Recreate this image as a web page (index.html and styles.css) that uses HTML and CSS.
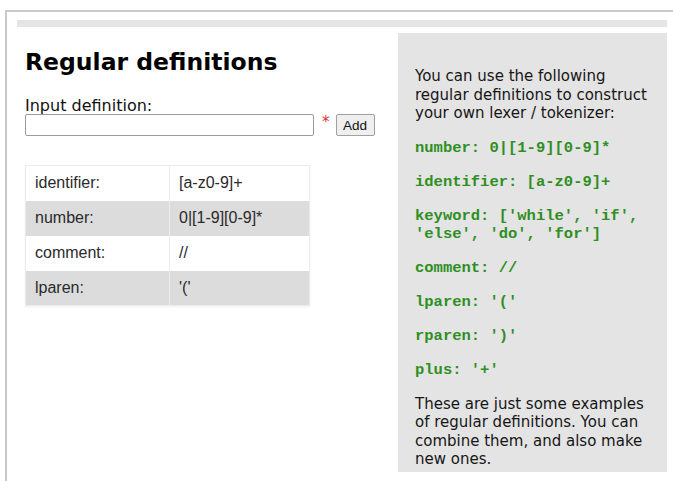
FILE: index.html
```html
<!DOCTYPE html>
<html>
<head>
<meta charset="utf-8">
<title>Regular definitions</title>
<link rel="stylesheet" href="styles.css">
</head>
<body>
<div class="frame">
  <div class="topbar"></div>
  <div class="content">
    <div class="main">
      <h1 class="title">Regular definitions</h1>
      <label class="field-label" for="def">Input definition:</label>
      <div class="field-row">
        <input id="def" class="field-input" type="text">
        <span class="required">*</span>
        <button class="add-btn" type="button">Add</button>
      </div>
      <table class="defs">
        <tr><td class="name">identifier:</td><td>[a-z0-9]+</td></tr>
        <tr class="alt"><td class="name">number:</td><td>0|[1-9][0-9]*</td></tr>
        <tr><td class="name">comment:</td><td>//</td></tr>
        <tr class="alt"><td class="name">lparen:</td><td>'('</td></tr>
      </table>
    </div>
    <aside class="help">
      <p>You can use the following regular definitions to construct your own lexer / tokenizer:</p>
      <p class="code">number: 0|[1-9][0-9]*</p>
      <p class="code">identifier: [a-z0-9]+</p>
      <p class="code">keyword: ['while', 'if', 'else', 'do', 'for']</p>
      <p class="code">comment: //</p>
      <p class="code">lparen: '('</p>
      <p class="code">rparen: ')'</p>
      <p class="code">plus: '+'</p>
      <p>These are just some examples of regular definitions. You can combine them, and also make new ones.</p>
    </aside>
  </div>
</div>
</body>
</html>
```
FILE: styles.css
```css
html, body {
  margin: 0;
  padding: 0;
  background: #fff;
  overflow: hidden;
}

body {
  font-family: "DejaVu Sans", Verdana, sans-serif;
  color: #111;
}

.frame {
  margin: 10px 0 0 5px;
  border-top: 2px solid #c9c9c9;
  border-left: 2px solid #c9c9c9;
  padding: 8px 6px 0 10px;
  height: 480px;
  box-sizing: border-box;
}

.topbar {
  height: 7px;
  background: #e5e5e5;
}

.content {
  display: flex;
  padding-top: 6px;
}

.main {
  flex: 1;
  padding-left: 8px;
}

.title {
  font-family: "DejaVu Sans", Verdana, sans-serif;
  font-weight: bold;
  font-size: 23.5px;
  margin: 15px 0 21px;
  color: #000;
}

.field-label {
  display: block;
  font-size: 16px;
  line-height: 17px;
  color: #111;
}

.field-row {
  display: flex;
  align-items: flex-start;
  margin-top: 0;
}

.field-input {
  width: 289px;
  height: 22px;
  box-sizing: border-box;
  border: 1px solid #9a9a9a;
  border-radius: 2px;
  margin: 0;
  padding: 0 3px;
  background: #fff;
}

.required {
  color: #e03030;
  font-family: "DejaVu Sans", sans-serif;
  font-size: 15px;
  margin: 1px 0 0 8px;
  line-height: 15px;
}

.add-btn {
  margin-left: 6px;
  margin-top: 0;
  height: 22px;
  width: 39px;
  padding: 0;
  font-family: "Liberation Sans", Arial, sans-serif;
  font-size: 13.5px;
  color: #111;
  background: #efefef;
  border: 1px solid #a0a0a0;
  border-radius: 2px;
}

.defs {
  margin-top: 29px;
  width: 285px;
  border-collapse: collapse;
  border: 1px solid #ececec;
  box-shadow: 0 1px 2px rgba(0, 0, 0, 0.06);
  font-family: "Liberation Sans", Arial, sans-serif;
  font-size: 16px;
  color: #2a2a2a;
}

.defs td {
  height: 35px;
  padding: 0 0 0 9px;
  box-sizing: border-box;
}

.defs td.name {
  width: 144px;
  border-right: 1px solid #ececec;
}

.defs tr.alt td {
  background: #dcdcdc;
}

.help {
  width: 269px;
  height: 439px;
  background: #e4e4e4;
  box-sizing: border-box;
  padding: 18px 12px 0 17px;
  font-size: 15px;
  line-height: 18.5px;
  color: #161616;
  overflow: hidden;
}

.help p {
  margin: 16px 0;
}

.help .code {
  font-family: "Liberation Mono", "Courier New", monospace;
  font-weight: bold;
  font-size: 15.5px;
  line-height: 18px;
  color: #2f8f1f;
}
```
